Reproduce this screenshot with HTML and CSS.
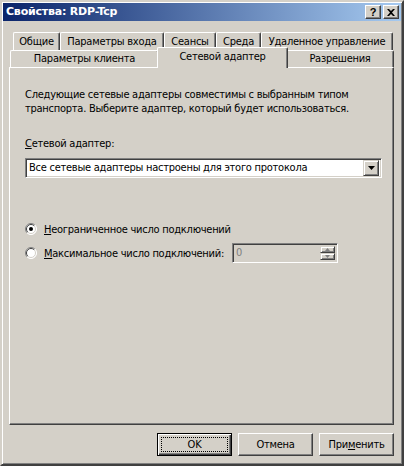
FILE: index.html
```html
<!DOCTYPE html>
<html lang="ru">
<head>
<meta charset="utf-8">
<title>Свойства: RDP-Tcp</title>
<link rel="stylesheet" href="styles.css">
</head>
<body>
<div class="window">
  <div class="titlebar">
    <span class="title">Свойства: RDP-Tcp</span>
    <div class="caption-btns">
      <span class="cbtn help">?</span>
      <span class="cbtn close"><svg width="8" height="7" viewBox="0 0 8 7"><path d="M0 0h2l2 2 2-2h2L5 3.5 8 7H6L4 5 2 7H0l3-3.5z" fill="#000"/></svg></span>
    </div>
  </div>
  <div class="body">
    <div class="tabs">
      <div class="tabrow back">
        <div class="tab t-general">Общие</div>
        <div class="tab t-logon">Параметры входа</div>
        <div class="tab t-sessions">Сеансы</div>
        <div class="tab t-env">Среда</div>
        <div class="tab t-remote">Удаленное управление</div>
      </div>
      <div class="tabrow front">
        <div class="tab t-client">Параметры клиента</div>
        <div class="tab t-adapter selected">Сетевой адаптер</div>
        <div class="tab t-perm">Разрешения</div>
      </div>
    </div>
    <div class="panel">
      <p class="desc">Следующие сетевые адаптеры совместимы с выбранным типом транспорта. Выберите адаптер, который будет использоваться.</p>
      <div class="label"><u>С</u>етевой адаптер:</div>
      <div class="combo">
        <span class="combo-text">Все сетевые адаптеры настроены для этого протокола</span>
        <span class="combo-btn"><svg width="7" height="4" viewBox="0 0 7 4"><path d="M0 0h7L3.5 4z" fill="#000"/></svg></span>
      </div>
      <div class="radios">
        <div class="radio-row">
          <svg class="radio" width="12" height="12" viewBox="0 0 12 12">
            <circle cx="6" cy="6" r="5.5" fill="#fff"/>
            <path d="M2.1 9.9A5.5 5.5 0 0 1 9.9 2.1" fill="none" stroke="#808080"/>
            <path d="M9.9 2.1A5.5 5.5 0 0 1 2.1 9.9" fill="none" stroke="#fff"/>
            <path d="M2.8 9.2A4.5 4.5 0 0 1 9.2 2.8" fill="none" stroke="#404040"/>
            <path d="M9.2 2.8A4.5 4.5 0 0 1 2.8 9.2" fill="none" stroke="#d4d0c8"/>
            <circle cx="6" cy="6" r="2" fill="#000"/>
          </svg>
          <span><u>Н</u>еограниченное число подключений</span>
        </div>
        <div class="radio-row">
          <svg class="radio" width="12" height="12" viewBox="0 0 12 12">
            <circle cx="6" cy="6" r="5.5" fill="#fff"/>
            <path d="M2.1 9.9A5.5 5.5 0 0 1 9.9 2.1" fill="none" stroke="#808080"/>
            <path d="M9.9 2.1A5.5 5.5 0 0 1 2.1 9.9" fill="none" stroke="#fff"/>
            <path d="M2.8 9.2A4.5 4.5 0 0 1 9.2 2.8" fill="none" stroke="#404040"/>
            <path d="M9.2 2.8A4.5 4.5 0 0 1 2.8 9.2" fill="none" stroke="#d4d0c8"/>
          </svg>
          <span><u>М</u>аксимальное число подключений:</span>
          <div class="spinner">
            <span class="spin-text">0</span>
            <div class="spin-btns">
              <span class="spin-btn"><svg width="5" height="3" viewBox="0 0 5 3"><path d="M0 3h5L2.5 0z" fill="#808080"/></svg></span>
              <span class="spin-btn"><svg width="5" height="3" viewBox="0 0 5 3"><path d="M0 0h5L2.5 3z" fill="#808080"/></svg></span>
            </div>
          </div>
        </div>
      </div>
    </div>
    <div class="buttons">
      <button class="btn default"><span class="focus">OK</span></button>
      <button class="btn">Отмена</button>
      <button class="btn">При<u>м</u>енить</button>
    </div>
  </div>
</div>
</body>
</html>
```

FILE: styles.css
```css
* { box-sizing: border-box; }
html, body { margin: 0; padding: 0; }
body {
  width: 404px;
  height: 466px;
  background: #d4d0c8;
  font-family: "DejaVu Sans Condensed", "Liberation Sans", sans-serif;
  font-size: 11px;
  letter-spacing: -0.25px;
  color: #000;
  overflow: hidden;
}
.window {
  width: 404px;
  height: 466px;
  background: #d4d0c8;
  border: 2px solid;
  border-color: #d4d0c8 #404040 #404040 #d4d0c8;
  box-shadow: inset 1px 1px 0 #fff, inset -1px -1px 0 #808080;
  padding: 1px;
  display: flex;
  flex-direction: column;
}
.titlebar {
  height: 18px;
  background: linear-gradient(to right, #0a246a, #a6caf0);
  display: flex;
  align-items: center;
  justify-content: space-between;
  padding: 0 2px 0 3px;
}
.title {
  color: #fff;
  font-family: "DejaVu Sans", "Liberation Sans", sans-serif;
  font-weight: bold;
  font-size: 11px;
  letter-spacing: -0.2px;
  line-height: 14px;
}
.caption-btns { display: flex; gap: 2px; }
.cbtn {
  width: 16px;
  height: 14px;
  background: #d4d0c8;
  border: 1px solid;
  border-color: #fff #404040 #404040 #fff;
  box-shadow: inset -1px -1px 0 #808080;
  display: flex;
  align-items: center;
  justify-content: center;
  font-weight: bold;
  font-size: 11px;
  line-height: 12px;
  letter-spacing: 0;
  font-family: "Liberation Sans", sans-serif;
}
.body {
  flex: 1;
  display: flex;
  flex-direction: column;
  padding: 11px 7px 7px 6px;
}
.tabs { display: flex; flex-direction: column; }
.tabrow { display: flex; }
.tabrow.back { margin: 0 1px 0 4px; height: 18px; }
.tabrow.front { margin: 0 0 0 1px; height: 17px; align-items: flex-end; }
.tab {
  flex: none;
  text-align: center;
  white-space: nowrap;
  padding: 2px 0 0;
  line-height: 14px;
  background: #d4d0c8;
  border-left: 1px solid #fff;
  border-top: 1px solid #fff;
  border-right: 1px solid #404040;
  box-shadow: inset -1px 0 0 #808080;
  border-radius: 2px 2px 0 0;
}
.t-general { width: 47px; }
.t-logon { width: 104px; }
.t-sessions { width: 52px; }
.t-env { width: 45px; }
.t-remote { flex: 1; }
.t-client { width: 149px; }
.t-adapter { width: 131px; }
.t-perm { flex: 1; }
.tabrow.front .tab { height: 17px; padding-top: 1px; }
.tabrow.front .tab.selected {
  position: relative;
  z-index: 2;
  height: 21px;
  margin: -3px -2px -1px;
  padding-top: 2px;
}
.panel {
  flex: 1;
  border: 1px solid;
  border-color: #fff #404040 #404040 #fff;
  box-shadow: inset -1px -1px 0 #808080;
  padding: 20px 11px 0 15px;
  position: relative;
  z-index: 1;
}
.desc {
  margin: 0;
  line-height: 14px;
  width: 340px;
}
.label {
  margin-top: 21px;
  line-height: 14px;
}
.combo {
  margin-top: 7px;
  height: 20px;
  background: #fff;
  border: 1px solid;
  border-color: #808080 #fff #fff #808080;
  box-shadow: inset 1px 1px 0 #404040, inset -1px -1px 0 #d4d0c8;
  display: flex;
  align-items: center;
  padding: 0 2px 0 3px;
}
.combo-text { flex: 1; line-height: 14px; }
.combo-btn {
  width: 16px;
  height: 16px;
  background: #d4d0c8;
  border: 1px solid;
  border-color: #d4d0c8 #404040 #404040 #d4d0c8;
  box-shadow: inset 1px 1px 0 #fff, inset -1px -1px 0 #808080;
  display: flex;
  align-items: center;
  justify-content: center;
}
.radios {
  margin-top: 41px;
  display: flex;
  flex-direction: column;
  gap: 4px;
}
.radio-row {
  display: flex;
  align-items: center;
  height: 20px;
}
.radio { margin: 0 7px 0 0; flex: none; }
.spinner {
  margin-left: 8px;
  width: 106px;
  height: 20px;
  border: 1px solid;
  border-color: #808080 #fff #fff #808080;
  box-shadow: inset 1px 1px 0 #404040, inset -1px -1px 0 #d4d0c8;
  display: flex;
  align-items: stretch;
  padding: 2px 2px 2px 3px;
}
.spin-text { flex: 1; color: #808080; line-height: 14px; }
.spin-btns { width: 15px; display: flex; flex-direction: column; }
.spin-btn {
  flex: 1;
  background: #d4d0c8;
  border: 1px solid;
  border-color: #d4d0c8 #404040 #404040 #d4d0c8;
  box-shadow: inset 1px 1px 0 #fff, inset -1px -1px 0 #808080;
  display: flex;
  align-items: center;
  justify-content: center;
}
.buttons {
  margin-top: 8px;
  display: flex;
  justify-content: flex-end;
  gap: 6px;
}
.btn {
  width: 75px;
  height: 23px;
  background: #d4d0c8;
  font-family: inherit;
  font-size: 11px;
  font-weight: normal;
  letter-spacing: inherit;
  color: #000;
  border: 1px solid;
  border-color: #fff #404040 #404040 #fff;
  box-shadow: inset -1px -1px 0 #808080;
  padding: 0;
  margin: 0;
  line-height: 14px;
}
.btn.default {
  border-color: #000;
  box-shadow: inset 1px 1px 0 #fff, inset -1px -1px 0 #404040, inset -2px -2px 0 #808080;
  padding: 3px;
  display: flex;
}
.focus {
  flex: 1;
  border: 1px dotted #000;
  display: flex;
  align-items: center;
  justify-content: center;
}
u { text-decoration: underline; text-underline-offset: 1px; }
```
